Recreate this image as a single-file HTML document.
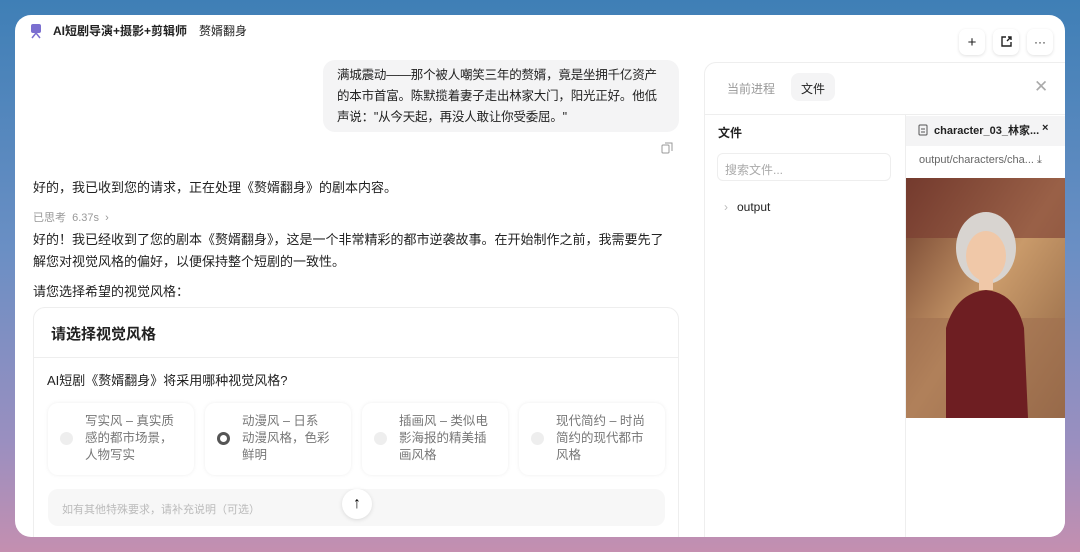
<!DOCTYPE html>
<html><head><meta charset="utf-8"><style>
*{box-sizing:border-box;margin:0;padding:0}
body{width:1080px;height:552px;overflow:hidden;font-family:"Liberation Sans","Noto Sans CJK SC",sans-serif;background:linear-gradient(180deg,#3f7fb6 0%,#6a8fc4 45%,#9a8fc0 80%,#c48fb0 100%);position:relative}
.win{position:absolute;left:15px;top:15px;width:1050px;height:522px;background:#fff;border-radius:16px;overflow:hidden}
.t{position:absolute;white-space:nowrap;color:#222}
.btn{position:absolute;top:14px;width:26px;height:26px;border-radius:7px;background:#fff;box-shadow:0 1px 3px rgba(0,0,0,.12);display:flex;align-items:center;justify-content:center;font-size:15px;color:#222}
.opt{position:absolute;top:388px;width:146px;height:72px;border-radius:10px;background:#fff;box-shadow:0 0 4px rgba(0,0,0,.07)}
.opt .r{position:absolute;left:12px;top:29px;width:13px;height:13px;border-radius:50%;background:#eee}
.opt .x{position:absolute;left:37px;top:10px;font-size:12.5px;line-height:17px;color:#777;white-space:nowrap}
</style></head><body>
<div class="win">
 <svg style="position:absolute;left:14px;top:8px" width="14" height="16"><rect x="2" y="1" width="10" height="9" rx="2" fill="#7b6fd0"/><path d="M3 15l4-5 4 5" stroke="#7b6fd0" stroke-width="1.5" fill="none"/></svg>
 <div class="t" style="left:38px;top:7px;font-size:12px;font-weight:bold">AI短剧导演+摄影+剪辑师</div>
 <div class="t" style="left:184px;top:7px;font-size:12px">赘婿翻身</div>
 <div class="btn" style="left:944px">+</div>
 <div class="btn" style="left:978px"><svg width="14" height="14"><path d="M7 2H3v9h9V7M8 6l4-4M9 2h3v3" stroke="#222" stroke-width="1.4" fill="none"/></svg></div>
 <div class="btn" style="left:1012px;font-size:12px">···</div>
 <div style="position:absolute;left:308px;top:45px;width:356px;height:72px;background:#f4f4f5;border-radius:12px"></div>
 <div class="t" style="left:322px;top:50px;font-size:12.5px;line-height:21px;letter-spacing:-0.2px">满城震动——那个被人嘲笑三年的赘婿，竟是坐拥千亿资产<br>的本市首富。陈默揽着妻子走出林家大门，阳光正好。他低<br>声说："从今天起，再没人敢让你受委屈。"</div>
 <svg style="position:absolute;left:646px;top:127px" width="12" height="12"><rect x="1" y="3" width="7" height="8" rx="1" stroke="#999" fill="none"/><path d="M4 1h7v8" stroke="#999" fill="none"/></svg>
 <div class="t" style="left:18px;top:162px;font-size:13px">好的，我已收到您的请求，正在处理《赘婿翻身》的剧本内容。</div>
 <div class="t" style="left:18px;top:194px;font-size:11px;color:#999">已思考 &nbsp;6.37s &nbsp;›</div>
 <div class="t" style="left:18px;top:214px;font-size:13px;line-height:22px">好的！我已经收到了您的剧本《赘婿翻身》，这是一个非常精彩的都市逆袭故事。在开始制作之前，我需要先了<br>解您对视觉风格的偏好，以便保持整个短剧的一致性。</div>
 <div class="t" style="left:18px;top:266px;font-size:13px">请您选择希望的视觉风格：</div>
 <div style="position:absolute;left:18px;top:292px;width:646px;height:250px;border:1px solid #eee;border-radius:12px"></div>
 <div style="position:absolute;left:19px;top:342px;width:644px;height:1px;background:#eee"></div>
 <div class="t" style="left:36px;top:308px;font-size:15px;font-weight:bold">请选择视觉风格</div>
 <div class="t" style="left:32px;top:355px;font-size:13px">AI短剧《赘婿翻身》将采用哪种视觉风格?</div>
 <div class="opt" style="left:33px"><div class="r"></div><div class="x">写实风 – 真实质<br>感的都市场景，<br>人物写实</div></div>
 <div class="opt" style="left:190px"><div class="r" style="background:#fff;border:3px solid #555"></div><div class="x">动漫风 – 日系<br>动漫风格，色彩<br>鲜明</div></div>
 <div class="opt" style="left:347px"><div class="r"></div><div class="x">插画风 – 类似电<br>影海报的精美插<br>画风格</div></div>
 <div class="opt" style="left:504px"><div class="r"></div><div class="x">现代简约 – 时尚<br>简约的现代都市<br>风格</div></div>
 <div style="position:absolute;left:33px;top:474px;width:617px;height:37px;background:#f7f7f7;border-radius:10px"></div>
 <div class="t" style="left:47px;top:486px;font-size:11px;color:#bbb">如有其他特殊要求，请补充说明（可选）</div>
 <div style="position:absolute;left:327px;top:474px;width:30px;height:30px;border-radius:50%;background:#fff;box-shadow:0 1px 4px rgba(0,0,0,.12);text-align:center;line-height:30px;font-size:16px">↑</div>
 <div style="position:absolute;left:689px;top:47px;width:361px;height:475px;border-left:1px solid #eee;border-top:1px solid #eee;border-top-left-radius:12px;background:#fff"></div>
 <div class="t" style="left:712px;top:65px;font-size:12px;color:#999">当前进程</div>
 <div style="position:absolute;left:776px;top:58px;width:44px;height:28px;background:#f4f4f5;border-radius:8px"></div>
 <div class="t" style="left:786px;top:65px;font-size:12px">文件</div>
 <div class="t" style="left:1019px;top:62px;font-size:17px;color:#aaa">✕</div>
 <div style="position:absolute;left:690px;top:99px;width:360px;height:1px;background:#eee"></div>
 <div style="position:absolute;left:890px;top:100px;width:1px;height:422px;background:#eee"></div>
 <div class="t" style="left:703px;top:109px;font-size:12px;font-weight:bold">文件</div>
 <div style="position:absolute;left:702px;top:138px;width:174px;height:28px;border:1px solid #eee;border-radius:6px"></div>
 <div class="t" style="left:710px;top:146px;font-size:12px;color:#aaa">搜索文件...</div>
 <div class="t" style="left:709px;top:185px;font-size:12px;color:#bbb">›</div>
 <div class="t" style="left:722px;top:185px;font-size:12px">output</div>
 <div style="position:absolute;left:891px;top:101px;width:159px;height:30px;background:#f4f4f5"></div>
 <svg style="position:absolute;left:903px;top:109px" width="10" height="12"><rect x="1" y="1" width="8" height="10" rx="1" stroke="#555" fill="none"/><path d="M3 5h4M3 8h4" stroke="#555"/></svg>
 <div class="t" style="left:919px;top:107px;font-size:11px;font-weight:bold">character_03_林家...</div>
 <div class="t" style="left:1027px;top:107px;font-size:11px;font-weight:bold">×</div>
 <div class="t" style="left:904px;top:139px;font-size:11px;color:#666">output/characters/cha... ⤓</div>
 <svg style="position:absolute;left:891px;top:163px" width="159" height="240">
  <defs><linearGradient id="g" x1="0" y1="0" x2="1" y2="1"><stop offset="0" stop-color="#6b3a2a"/><stop offset=".5" stop-color="#c99a6a"/><stop offset="1" stop-color="#8a6040"/></linearGradient></defs>
  <rect width="159" height="240" fill="url(#g)"/>
  <rect x="0" y="0" width="159" height="60" fill="#7a3b30" opacity=".6"/>
  <rect x="0" y="140" width="159" height="100" fill="#a07050" opacity=".6"/>
  <path d="M40 240L40 150Q50 115 80 112Q110 115 118 150L122 240Z" fill="#6e1e22"/>
  <ellipse cx="80" cy="70" rx="30" ry="36" fill="#d8d4d0"/>
  <ellipse cx="80" cy="78" rx="20" ry="25" fill="#f0c8a8"/>
  <rect x="73" y="98" width="14" height="14" fill="#f0c8a8"/>
 </svg>
</div>
</body></html>
